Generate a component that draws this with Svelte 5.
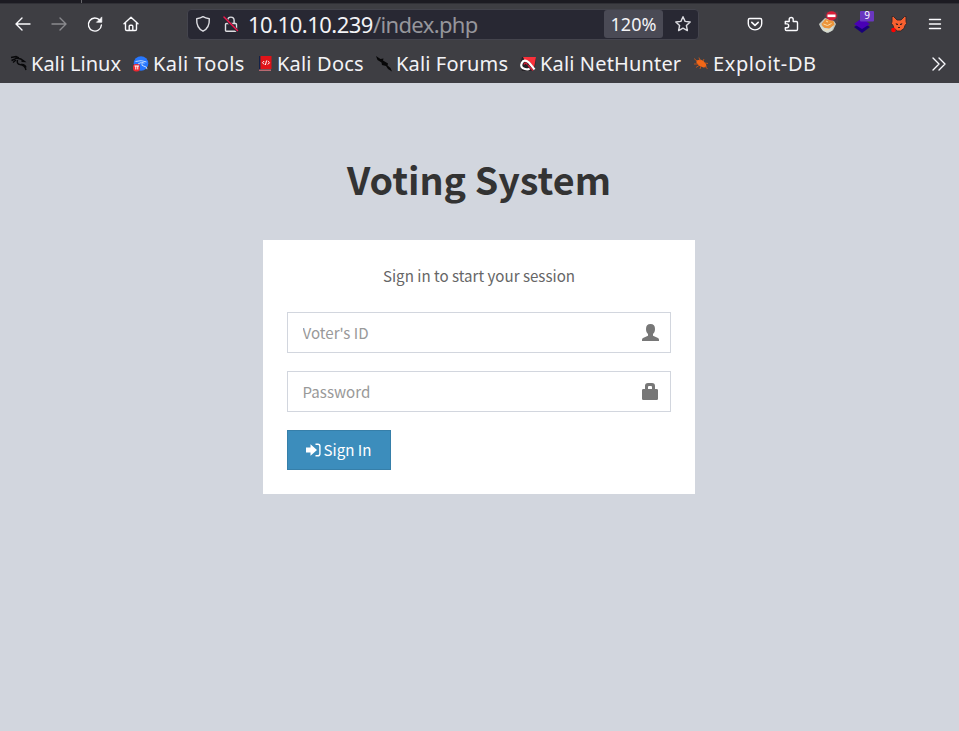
<script>
  const bookmarks = [
    { name: 'Kali Linux', icon: 'dragon', width: 122, spacing: 0 },
    { name: 'Kali Tools', icon: 'tools', width: 124, spacing: 0.4 },
    { name: 'Kali Docs', icon: 'docs', width: 119, spacing: 0.2 },
    { name: 'Kali Forums', icon: 'forums', width: 144, spacing: 0.15 },
    { name: 'Kali NetHunter', icon: 'hunter', width: 173, spacing: 0.15 },
    { name: 'Exploit-DB', icon: 'exploit', width: 130, spacing: 0.6 },
  ];
  let voter = $state('');
  let password = $state('');
</script>

<div class="window">
  <header>
    <div class="tabs"><span></span></div>
    <nav class="toolbar">
      <div class="buttons">
        <button aria-label="Back"><svg width="36" height="36" class="line"><path d="M25 18H11.5M17 12l-6 6 6 6" /></svg></button>
        <button aria-label="Forward" class="dim"><svg width="36" height="36" class="line"><path d="M11 18h13.5M19 12l6 6-6 6" /></svg></button>
        <button aria-label="Reload"><svg width="36" height="36" class="line"><path d="M23 14.500A6.500 6.500 0 1 0 24.400 19" /><path d="M19.800 16.300h5v-5z" fill="#fbfbfe" stroke-width=".7" /></svg></button>
        <button aria-label="Home"><svg width="36" height="36" class="line"><path d="M11 17.800l7-6.500 7 6.500M12.500 17v6.200q0 1.300 1.300 1.300h8.400q1.300 0 1.300-1.300V17M16.200 24.300v-4.100q0-1 1-1h1.600q1 0 1 1v4.100" /></svg></button>
      </div>
      <div class="address">
        <svg class="line soft" width="16" height="18"><path d="M8 1.600c2 1.300 4.300 1.800 6.300 2.100.3 5.800-1.700 10.200-6.300 12.500C3.400 13.900 1.400 9.500 1.700 3.700 3.700 3.400 6 2.900 8 1.600z" /></svg>
        <svg class="line soft lock" width="16" height="18"><path d="M4.700 8.500V5.300a3.200 3.200 0 0 1 6.400 0V8M3.500 8.500h9q1 0 1 1v5.700q0 1-1 1h-9q-1 0-1-1V9.500q0-1 1-1z" /><path d="M1 2.500l13.500 13.300" stroke="#282833" stroke-width="3" /><path d="M1 2l13.500 13.500" stroke="#f5164d" /></svg>
        <span class="url">10.10.10.239<i>/index.php</i></span>
        <span class="zoom">120%</span>
        <svg class="line soft star" width="18" height="18"><path d="M9 1.700l2.100 4.700 5.100.6-3.800 3.500 1 5.100L9 13.100l-4.400 2.500 1-5.100L1.800 7l5.100-.6z" /></svg>
      </div>
      <div class="buttons">
        <button aria-label="Save to Pocket"><svg width="36" height="36" class="line"><path d="M12.800 12.500h10.400q1.500 0 1.500 1.500v3.700a6.700 6.200 0 0 1-13.400 0V14q0-1.500 1.500-1.500z" /><path d="M14.800 16.300l3.200 3 3.200-3" stroke-width="1.600" /></svg></button>
        <button aria-label="Extensions"><svg width="36" height="36" class="line"><path d="M12.300 15.500h3.900v-2a2 2 0 0 1 4 0v2h3.100q1.200 0 1.200 1.200v6.600q0 1.200-1.200 1.200h-9.800q-1.200 0-1.200-1.200v-1.600h1.500a1.900 1.900 0 0 0 0-3.800h-1.500z" /></svg></button>
        <button aria-label="Cookie editor"><svg width="37" height="36"><path d="M15.500 5.500h13.500v11H15.500z" fill="#4b414a" /><path d="M10 18l6-6 9 3 2 3-3 6.300-5 2.700-5-2-2-3z" fill="#c3c7c0" /><path d="M12.500 18l4-5 8 2 1 4-4 3.500-6-.5-2-2z" fill="#ec943a" /><path d="M10 18l4 3.500 6 1.500 5-4-2.500 6-5 1.500-4.500-3z" fill="#d5dbd2" /><path d="M14.500 18l4 1.500 4-2M16 24l4-.5M17 15l2 1" stroke="#f9dca8" fill="none" /><ellipse cx="22.500" cy="9.800" rx="5.300" ry="4.600" fill="#d81d38" /><path d="M18.500 8.500h8v2.600h-8z" fill="#fff" /></svg></button>
        <button aria-label="Layers, 9"><svg width="36" height="36"><path d="M9 21l8 6 8-6-8-5z" fill="#190078" /><path d="M9 18l8 5 8-5-8-6z" fill="#4900b5" /><rect x="15" y="5" width="14" height="10.500" rx="1" fill="#6937bf" /><text x="22" y="13.400" text-anchor="middle">9</text></svg></button>
        <button aria-label="Fox proxy"><svg width="36" height="36"><path d="M11 10.500l1.500 0 3.500 3.500h4l3.500-3.500H25v5l.5 2-1.500 2-1 3-3.500 2.500h-3L13 22.500l-1-3-1.500-2 .5-2z" fill="#f8602f" stroke="#332528" stroke-width=".9" /><path d="M14.500 17l2.500 1v1h-1.500zM21.500 17L19 18v1h1.500zM17 21h2v1h-2z" fill="#331f20" /><circle cx="12.500" cy="24" r="2.300" fill="#f00" /></svg></button>
        <button aria-label="Menu"><svg width="36" height="36" class="line"><path d="M12.500 13.500h11M12.500 18h11M12.500 22.500h11" /></svg></button>
      </div>
    </nav>
    <nav class="bookmarks">
      {#each bookmarks as b}
        <a href="#bookmark" style:width="{b.width}px">
          <svg width="16" height="16">
            {#if b.icon === 'dragon'}
              <path d="M0 1.500l5-1 3 1.500M.5 4.500l3.500-1.500M2 6.500l3-2.500M4 2.500q5-1 9.500 3l-3-.2M6.500 4q-1 4 2.500 4.500 5 .5 6 5.500M10 8.500q4-.5 5 3" fill="none" stroke="#08080a" stroke-width="1.400" />
            {:else if b.icon === 'tools'}
              <circle cx="8" cy="7.500" r="7.300" fill="#2777ff" /><path d="M2.500 5.500q6-2 11 .5M5 8q4-3 6.500-.8M9 7q-1 3 2 3.200t3 3" stroke="#cce3ff" fill="none" stroke-width=".9" /><rect y="8" width="7" height="7.500" rx="3" fill="#ed2830" /><path d="M1.500 10h4.500M2.800 10v3.500M4.800 10v3.500" stroke="#fff" fill="none" />
            {:else if b.icon === 'docs'}
              <path d="M2 0h1.500v15H2z" fill="#132248" /><path d="M3.500 0h11v13h-11z" fill="#e11318" /><path d="M2 13.500h12V15H2z" fill="#b96a72" /><path d="M7.200 5l-1.700 1.700 1.700 1.800M10.800 5l1.700 1.700-1.700 1.800M9.600 4.500L8.400 9" stroke="#fff" stroke-width="1" fill="none" />
            {:else if b.icon === 'forums'}
              <path d="M0 0l4.500 3 3-.5-.5 2 5 3-.5 2 3 2.500 1.500 3.500-4-2.500-2-3-4-1-.5-2.500-4-2.500z" fill="#060607" />
            {:else if b.icon === 'hunter'}
              <path d="M2 1h14l-1 11-4 3H2L0 9z" fill="#242126" /><path d="M3 1h13l-2 11-4-6-5-1z" fill="#fa303a" /><path d="M14.500 13.500L9 6.500Q4 2.500 1.800 7t3.200 6q3 1 4.500-.5" fill="none" stroke="#fff" stroke-width="2.200" /><path d="M8 9l5 5.500M4 8.500q1-3 3.500 0" fill="none" stroke="#d71d35" stroke-width="1.500" />
            {:else}
              <path d="M3.500 4.500l4-1 3 1.500 2.500 3 .5 3-3 .5-4-1.500-3-3z" fill="#f26717" /><path d="M1 2.500l3 2.500M6 1.500l1 3M11 3l-1 2M1 8h4M3 11.500l3-2M7 13l1-3M12 7l3 .5M12 10l2.500 3" stroke="#c95518" stroke-width=".9" />
            {/if}
          </svg><span style:letter-spacing="{b.spacing}px">{b.name}</span>
        </a>
      {/each}
      <svg class="line more" width="16" height="16"><path d="M2 2l6 6-6 6M8 2l6 6-6 6" /></svg>
    </nav>
  </header>

  <main>
    <h1>Voting System</h1>
    <form onsubmit={(e) => e.preventDefault()}>
      <p>Sign in to start your session</p>
      <label>
        <input type="text" placeholder="Voter's ID" bind:value={voter} />
        <svg width="17" height="17" viewBox="0 0 17 17"><path d="M8.500 0c3 0 4.500 1.700 4.500 5 0 2.200-.7 4-2 5v1.700l5 2.300q1 .6 1 1.700V17H0v-1.300q0-1.100 1-1.700l5-2.300V10C4.700 9 4 7.200 4 5c0-3.300 1.500-5 4.500-5z" fill="#777" /></svg>
      </label>
      <label>
        <input type="password" placeholder="Password" bind:value={password} />
        <svg width="17" height="17" viewBox="0 0 17 17"><path fill-rule="evenodd" d="M3 6V3q0-3 3-3h4q3 0 3 3v3h1.700q1.300 0 1.300 1.300v8.400q0 1.300-1.300 1.300H1.300Q0 17 0 15.700V7.300Q0 6 1.300 6zm3 0h4V4q0-1-1-1H7Q6 3 6 4z" fill="#777" /></svg>
      </label>
      <button class="submit"><svg width="15" height="14" viewBox="0 0 15 14"><path d="M0 4.500h4.500V1.200L11 7l-6.500 5.800V9.500H0z" fill="#fff" /><path d="M9.500 1.200h2.300q2.100 0 2.100 2.100v7.400q0 2.100-2.100 2.100H9.500" fill="none" stroke="#fff" stroke-width="1.400" /></svg><span>Sign In</span></button>
    </form>
  </main>
</div>

<style>
  :global(body) { margin: 0; overflow: hidden; }
  .window { width: 959px; height: 731px; display: flex; flex-direction: column; background: #d2d6de; }
  header { height: 83px; background: #3e3e43; font-family: 'Noto Sans', sans-serif; color: #f3f3f6; }
  .tabs { height: 3px; background: #1c1b22; border-bottom: 1px solid #303036; display: flex; }
  .tabs span { width: 1px; margin-left: 81px; background: #68686c; }
  .toolbar { height: 40px; display: flex; align-items: center; padding-left: 5px; }
  .buttons { display: flex; }
  button { border: 0; padding: 0; background: none; font: inherit; }
  .buttons button { width: 36px; height: 36px; }
  svg { display: block; flex: none; overflow: visible; }
  .line { fill: none; stroke: #fbfbfe; stroke-width: 1.4; stroke-linecap: round; stroke-linejoin: round; }
  .soft { stroke: #dddde2; }
  .dim { opacity: .4; }
  text { font: 10px 'Noto Sans', sans-serif; fill: #fff; }
  .address { box-sizing: border-box; width: 512px; height: 31px; margin: 0 38px 0 38px; padding: 0 6px 0 7px; border: 1px solid #44444d; border-radius: 4px; background: #282833; display: flex; align-items: center; }
  .lock { margin-left: 12px; }
  .url { flex: 1; margin-left: 9px; font-size: 22px; line-height: 30px; letter-spacing: -.5px; white-space: nowrap; }
  .url i { font-style: normal; letter-spacing: -.65px; color: #96969c; }
  .zoom { width: 59px; height: 28px; border-radius: 3px; background: #4a4a55; text-align: center; font-size: 18px; line-height: 28px; }
  .star { margin-left: 11px; }
  .bookmarks { height: 39px; display: flex; align-items: center; padding-left: 11px; }
  .bookmarks a { display: flex; align-items: center; gap: 4px; color: inherit; text-decoration: none; font-size: 20px; line-height: 38px; white-space: nowrap; }
  .more { margin-left: 108px; }
  main { width: 957px; flex: 1; display: flex; flex-direction: column; align-items: center; font-family: 'Noto Sans CJK SC', sans-serif; }
  h1 { margin: 68px 0 0 1px; height: 89px; font-size: 37.7px; line-height: 56px; font-weight: 700; color: #333; }
  form { box-sizing: border-box; width: 432px; height: 254px; padding: 24px; background: #fff; font-size: 15.12px; color: #666; }
  p { margin: 0 0 24px 1px; height: 24px; line-height: 22px; text-align: center; }
  label { box-sizing: border-box; display: flex; align-items: center; height: 41px; margin-bottom: 18px; border: 1px solid #d2d6de; padding: 0 11px 0 15px; }
  input { flex: 1; min-width: 0; height: 37px; border: 0; outline: 0; padding: 0 0 2px; box-sizing: border-box; background: none; color: #555; font: inherit; }
  input::placeholder { color: #999; opacity: 1; }
  .submit { box-sizing: border-box; width: 104px; height: 40px; border: 1px solid #367fa9; background: #3c8dbc; color: #fff; display: flex; align-items: center; justify-content: center; gap: 3px; line-height: 24px; }
  .submit span { margin-bottom: 2px; }
</style>
